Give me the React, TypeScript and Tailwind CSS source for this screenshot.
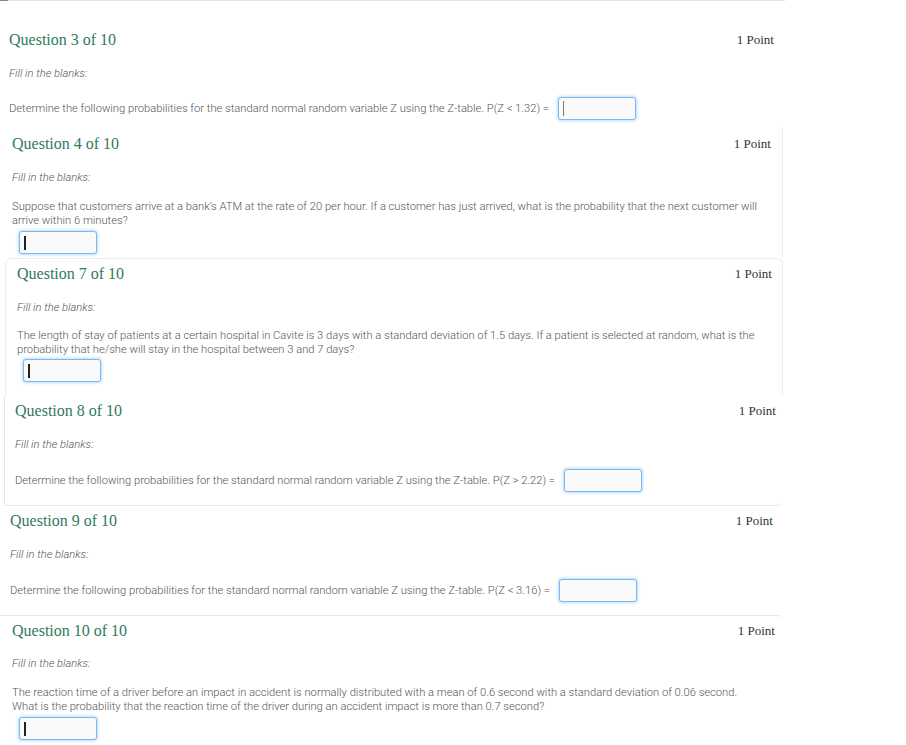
import React from 'react';

const body = "font-['Roboto',sans-serif] font-light text-[11.2px] text-[#555555] whitespace-nowrap";
const slab = "font-['Liberation_Serif','DejaVu_Serif',serif]";

function Header({ num }: { num: number }) {
  return (
    <div className="flex h-[20px] items-center justify-between">
      <h2 className={`${slab} text-[16px] leading-[20px] text-[#2f7a5b]`}>Question {num} of 10</h2>
      <span className={`${slab} text-[13px] leading-[20px] text-[#333333]`}>1 Point</span>
    </div>
  );
}

function Fill({ className = 'mt-[16px]' }: { className?: string }) {
  return <p className={`${body} ${className} h-[16px] italic leading-[16px]`}>Fill in the blanks:</p>;
}

function Blank({ caret, className = '' }: { caret?: 'thin' | 'thick'; className?: string }) {
  return (
    <div
      className={`flex h-[23px] w-[78px] shrink-0 items-center rounded-[3px] border border-[#7cb9f0] bg-[#fafafa] pl-[4px] shadow-[0_0_3px_1px_#bcdcf8] ${className}`}
    >
      {caret === 'thin' && <span className="h-[15px] w-px bg-[#777777]" />}
      {caret === 'thick' && <span className="h-[14px] w-[2px] bg-[#222222]" />}
    </div>
  );
}

export default function App() {
  return (
    <div className="h-[745px] w-[906px] overflow-hidden bg-white">
      {/* Question 3 */}
      <section className="relative h-[125px] w-[785px] border-t border-[#e3e3e3] pl-[9px] pr-[11px] pt-[29px]">
        <span className="absolute -top-px left-0 h-px w-[8px] bg-[#8a8a8a]" />
        <Header num={3} />
        <Fill />
        <div className="mt-[15px] flex items-center gap-[9px]">
          <p className={`${body} leading-[14px]`}>
            Determine the following probabilities for the standard normal random variable Z using the Z-table. P(Z &lt; 1.32) =
          </p>
          <Blank caret="thin" />
        </div>
      </section>

      {/* Question 4 */}
      <section className="h-[133px] w-[783px] rounded-tr-[5px] border-r border-[#ececec] pl-[12px] pr-[11px] pt-[9px]">
        <Header num={4} />
        <Fill />
        <p className={`${body} mt-[14px] leading-[14px]`}>
          Suppose that customers arrive at a bank’s ATM at the rate of 20 per hour. If a customer has just arrived, what is the probability that the next customer will
          <br />
          arrive within 6 minutes?
        </p>
        <Blank caret="thick" className="ml-[7px] mt-[3px]" />
      </section>

      {/* Question 7 */}
      <div className="pl-[5px]">
        <section className="h-[137px] w-[778px] rounded-t-[6px] border-l border-r border-t border-[#ececec] pl-[11px] pr-[10px] pt-[5px]">
          <Header num={7} />
          <Fill />
          <p className={`${body} mt-[13px] leading-[14px]`}>
            The length of stay of patients at a certain hospital in Cavite is 3 days with a standard deviation of 1.5 days. If a patient is selected at random, what is the
            <br />
            probability that he/she will stay in the hospital between 3 and 7 days?
          </p>
          <Blank caret="thick" className="ml-[6px] mt-[2px]" />
        </section>
      </div>

      {/* Question 8 */}
      <div className="pl-[4px]">
        <section className="h-[111px] w-[779px] rounded-br-[6px] border-b border-l border-[#e8e8e8] pl-[10px] pr-[7px] pt-[6px]">
          <Header num={8} />
          <Fill />
          <div className="mt-[16px] flex items-center gap-[9px]">
            <p className={`${body} leading-[14px]`}>
              Determine the following probabilities for the standard normal random variable Z using the Z-table. P(Z &gt; 2.22) =
            </p>
            <Blank />
          </div>
        </section>
      </div>

      {/* Question 9 */}
      <section className="h-[109px] w-[783px] pl-[10px] pr-[10px] pt-[5px]">
        <Header num={9} />
        <Fill />
        <div className="mt-[16px] flex items-center gap-[9px]">
          <p className={`${body} leading-[14px]`}>
            Determine the following probabilities for the standard normal random variable Z using the Z-table. P(Z &lt; 3.16) =
          </p>
          <Blank />
        </div>
      </section>

      {/* Question 10 */}
      <section className="h-[130px] w-[783px] rounded-tr-[5px] border-t border-[#e8e8e8] pl-[12px] pr-[8px] pt-[5px]">
        <Header num={10} />
        <Fill className="mt-[15px]" />
        <p className={`${body} mt-[14px] leading-[14px]`}>
          The reaction time of a driver before an impact in accident is normally distributed with a mean of 0.6 second with a standard deviation of 0.06 second.
          <br />
          What is the probability that the reaction time of the driver during an accident impact is more than 0.7 second?
        </p>
        <Blank caret="thick" className="ml-[7px] mt-[3px]" />
      </section>
    </div>
  );
}
